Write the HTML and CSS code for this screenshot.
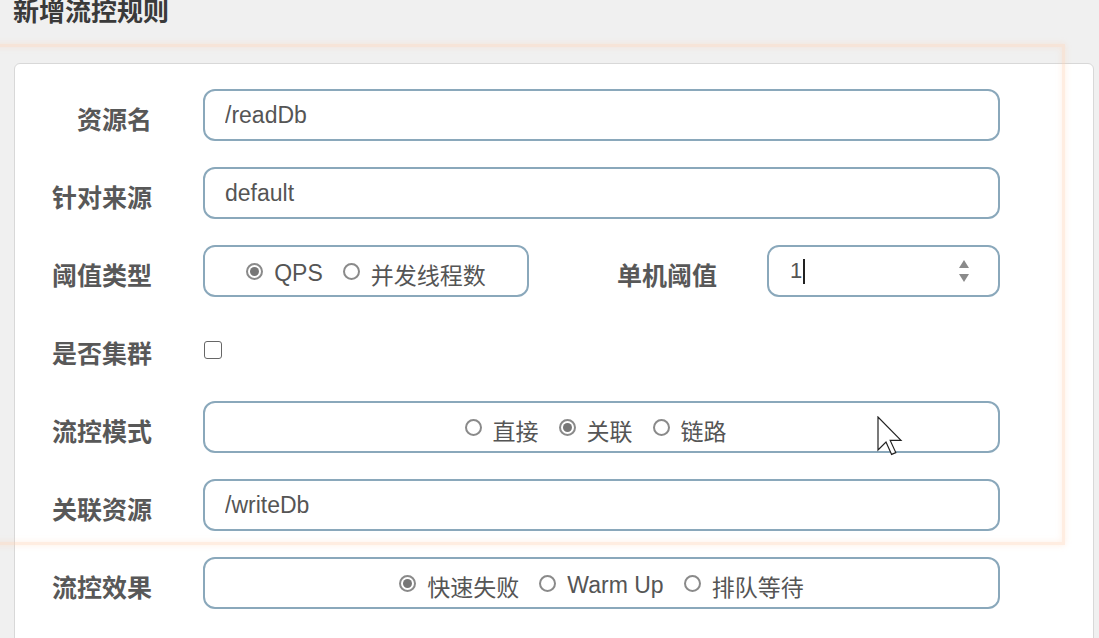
FILE: index.html
```html
<!DOCTYPE html>
<html lang="zh-CN">
<head>
<meta charset="utf-8">
<title>新增流控规则</title>
<link rel="stylesheet" href="styles.css">
</head>
<body>
<div class="page">
  <div class="header"><h2 class="title">新增流控规则</h2></div>
  <div class="card">
    <form class="form">
      <div class="row">
        <label class="label">资源名</label>
        <input class="field" type="text" value="/readDb">
      </div>
      <div class="row">
        <label class="label">针对来源</label>
        <input class="field" type="text" value="default">
      </div>
      <div class="row">
        <label class="label">阈值类型</label>
        <div class="field group short">
          <span class="opt"><span class="radio checked"></span>QPS</span>
          <span class="opt"><span class="radio"></span>并发线程数</span>
        </div>
        <label class="label inline">单机阈值</label>
        <div class="field num">
          <span class="num-value">1</span><span class="caret"></span>
          <svg class="spin" width="12" height="24" viewBox="0 0 12 24"><path d="M6 1 L11 9 L1 9 Z" fill="#8a8a8a"/><path d="M6 23 L11 15 L1 15 Z" fill="#8a8a8a"/></svg>
        </div>
      </div>
      <div class="row">
        <label class="label">是否集群</label>
        <span class="checkbox"></span>
      </div>
      <div class="row">
        <label class="label">流控模式</label>
        <div class="field group mode">
          <span class="opt"><span class="radio"></span>直接</span>
          <span class="opt"><span class="radio checked"></span>关联</span>
          <span class="opt"><span class="radio"></span>链路</span>
        </div>
      </div>
      <div class="row">
        <label class="label">关联资源</label>
        <input class="field" type="text" value="/writeDb">
      </div>
      <div class="row">
        <label class="label">流控效果</label>
        <div class="field group">
          <span class="opt"><span class="radio checked"></span>快速失败</span>
          <span class="opt"><span class="radio"></span>Warm Up</span>
          <span class="opt"><span class="radio"></span>排队等待</span>
        </div>
      </div>
    </form>
  </div>
  <div class="highlight"></div>
  <svg class="cursor" width="26" height="40" viewBox="0 0 13 20"><path d="M0.5 0.5 L0.5 17 L4.5 13 L7.3 19.2 L9.4 18.3 L6.6 12.2 L12 12.2 Z" fill="#fff" stroke="#222" stroke-width="0.6" stroke-linejoin="miter"/></svg>
</div>
</body>
</html>
```

FILE: styles.css
```css
html, body {
  margin: 0;
  padding: 0;
  background: #f0f0f0;
  overflow: hidden;
}
.page {
  position: relative;
  width: 1099px;
  height: 638px;
  overflow: hidden;
  font-family: "Liberation Sans", "Noto Sans CJK SC", sans-serif;
}
.header {
  display: flow-root;
  height: 63px;
  padding-left: 13px;
  box-sizing: border-box;
}
.title {
  margin: -3px 0 0 0;
  font-family: "Noto Sans CJK SC", sans-serif;
  font-size: 26px;
  line-height: 26px;
  font-weight: bold;
  color: #3a3a3a;
}
.card {
  margin: 0 5px 0 14px;
  height: 620px;
  background: #fff;
  border: 1px solid #d8d8d8;
  border-radius: 6px;
  box-sizing: border-box;
  padding-top: 25px;
}
.form {
  display: flex;
  flex-direction: column;
  gap: 26px;
}
.row {
  display: flex;
  align-items: center;
  height: 52px;
}
.label {
  flex: none;
  width: 137px;
  margin-right: 51px;
  text-align: right;
  font-family: "Noto Sans CJK SC", sans-serif;
  font-weight: bold;
  font-size: 25px;
  color: #585858;
  padding-top: 6px;
}
.label.inline {
  width: 188px;
  margin-right: 50px;
}
.field {
  flex: none;
  width: 797px;
  height: 52px;
  box-sizing: border-box;
  border: 2px solid #8aa8bb;
  border-radius: 12px;
  padding: 0 20px;
  font-family: "Liberation Sans", "Noto Sans CJK SC", sans-serif;
  font-size: 23px;
  color: #555;
  background: #fff;
  outline: none;
}
.group {
  display: flex;
  justify-content: center;
  align-items: center;
  padding: 5px 0 0 0;
  font-size: 23px;
  color: #555;
}
.group.short {
  width: 326px;
}
.group.mode {
  padding-right: 12px;
}
.opt {
  flex: none;
  display: inline-flex;
  align-items: center;
  margin: 0 10px;
  white-space: nowrap;
}
.radio {
  flex: none;
  position: relative;
  display: inline-block;
  width: 17px;
  height: 17px;
  box-sizing: border-box;
  border: 2px solid #8a8a8a;
  border-radius: 50%;
  margin-right: 11px;
  margin-top: -4px;
  background: #fff;
}
.radio.checked::after {
  content: "";
  position: absolute;
  left: 2px;
  top: 2px;
  width: 9px;
  height: 9px;
  border-radius: 50%;
  background: #777;
}
.num {
  width: 233px;
  display: flex;
  align-items: center;
  position: relative;
  padding-left: 21px;
}
.num-value {
  font-size: 22px;
  color: #555;
}
.caret {
  display: inline-block;
  width: 1.5px;
  height: 25px;
  background: #222;
  margin-left: 1px;
}
.spin {
  position: absolute;
  right: 28px;
  top: 12px;
}
.checkbox {
  display: inline-block;
  width: 18px;
  height: 18px;
  box-sizing: border-box;
  border: 1.5px solid #666;
  border-radius: 3px;
  margin-left: 1px;
  margin-top: 2px;
  background: #fff;
}
.highlight {
  position: absolute;
  left: -12px;
  top: 44px;
  width: 1077px;
  height: 501px;
  box-sizing: border-box;
  border: 3px solid rgba(255, 210, 180, 0.4);
  box-shadow: 0 0 6px rgba(255, 195, 155, 0.3), inset 0 0 6px rgba(255, 195, 155, 0.25);
  pointer-events: none;
}
.cursor {
  position: absolute;
  left: 877px;
  top: 416px;
  pointer-events: none;
}
```
